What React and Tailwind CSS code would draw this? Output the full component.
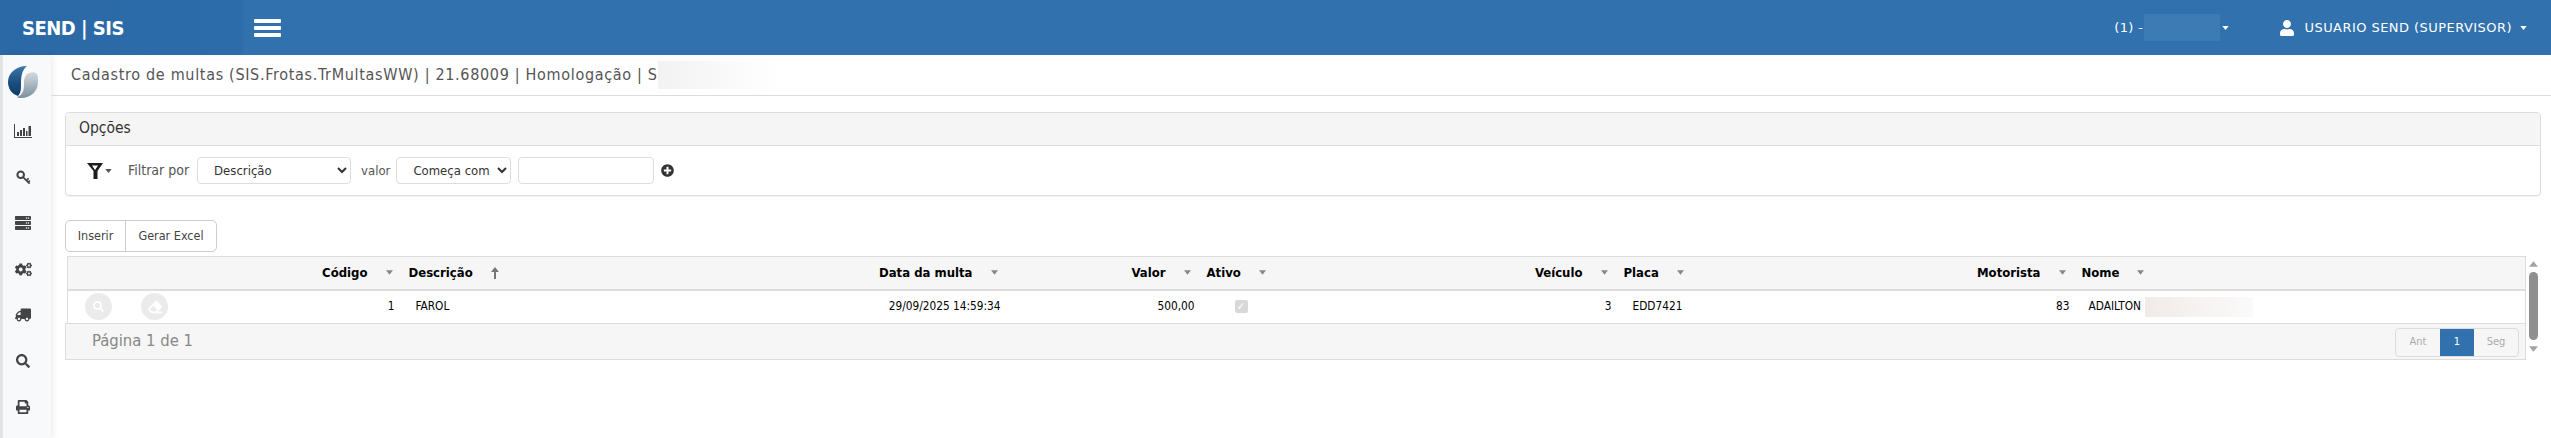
import { FaCogs, FaEraser, FaPlusCircle, FaPrint, FaSearch, FaServer, FaTruck, FaUser } from "react-icons/fa";

const font = { fontFamily: '"DejaVu Sans Condensed", "DejaVu Sans", sans-serif' };
const wideFont = { fontFamily: '"DejaVu Sans", sans-serif' };

function Caret({ className }) {
    return (
        <svg viewBox="0 0 8 5" className={className} fill="currentColor">
            <path d="M0 0h8L4 5z" />
        </svg>
    );
}

function ChartIcon() {
    return (
        <svg viewBox="0 0 18 14" className="w-[18px] h-[14px]" fill="#444">
            <path d="M0 0h1v13h17v1H0z" />
            <path d="M3 8h2v4H3zM6 6h2v6H6zM9 4h2v8H9zM12 7h1.500v5H12zM14.500 2H17v10h-2.500z" />
        </svg>
    );
}

function KeyIcon() {
    return (
        <svg viewBox="0 0 16 16" className="w-[15px] h-[15px]" fill="none" stroke="#444">
            <circle cx="5" cy="5" r="3.500" strokeWidth="2.200" />
            <path d="M7.500 7.500l7 7M11 11l2.500-2M13 13l1.800-1.600" strokeWidth="1.800" />
        </svg>
    );
}

function FunnelIcon() {
    return (
        <svg viewBox="0 0 16 16" className="w-[16px] h-[16px]" fill="#1c1c1c">
            <path d="M0 0h16l-5.500 8v8h-4V8zM5 2.500l3 4.500 3-4.500z" fillRule="evenodd" />
        </svg>
    );
}

function Logo() {
    return (
        <svg viewBox="0 0 30 32" className="w-[30px] h-[32px]">
            <defs>
                <linearGradient id="logoBlue" x1="0" y1="0" x2="0" y2="1">
                    <stop offset="0" stopColor="#3b78ab" />
                    <stop offset="0.55" stopColor="#1c4f7f" />
                    <stop offset="1" stopColor="#0d3a63" />
                </linearGradient>
                <linearGradient id="logoGray" x1="0" y1="0" x2="0" y2="1">
                    <stop offset="0" stopColor="#d4dade" />
                    <stop offset="1" stopColor="#7d8f9c" />
                </linearGradient>
            </defs>
            <path d="M19 0C8 0 0 7 0 16c0 7 4 12 10 14 3-3 3-7 3-12 0-8 1-14 6-18z" fill="url(#logoBlue)" />
            <path d="M29 8c1 2 1 5 1 8 0 9-7 16-17 16-2 0-3 0-4-1 6-2 7-7 7-13 0-5 1-10 5-11 3-1 6-1 8 1z" fill="url(#logoGray)" />
        </svg>
    );
}

function SortHead({ label, right, up, className }) {
    return (
        <th className={"font-bold text-[13px] text-black p-0 " + (className || "")}>
            <div className={"flex items-center " + (right ? "justify-end pr-[8px]" : "pl-[8px]")}>
                <span>{label}</span>
                {up ? (
                    <svg viewBox="0 0 8 12" className="w-[8px] h-[12px] ml-[18px] text-[#777]" fill="currentColor">
                        <path d="M4 0l4 5H5v7H3V5H0z" />
                    </svg>
                ) : (
                    <Caret className="w-[7px] h-[5px] ml-[18px] text-[#888]" />
                )}
            </div>
        </th>
    );
}

const sideIcons = [
    <ChartIcon key="chart" />,
    <KeyIcon key="key" />,
    <FaServer key="server" className="text-[#444] text-[16px]" />,
    <FaCogs key="cogs" className="text-[#444] text-[17px]" />,
    <FaTruck key="truck" className="text-[#444] text-[16px] -scale-x-100" />,
    <FaSearch key="search" className="text-[#444] text-[14px]" />,
    <FaPrint key="print" className="text-[#444] text-[14px]" />,
];

export default function App() {
    return (
        <div className="h-[438px] w-full flex flex-col bg-white overflow-hidden" style={font}>
            {/* Top bar */}
            <header className="h-[55px] flex items-center bg-[#3071ae] text-white shrink-0">
                <div className="w-[243px] h-full flex items-center pl-[22px] bg-gradient-to-r from-[#2a69a5] to-[#2d6cab]">
                    <span className="text-[20px] font-bold leading-none tracking-[-0.5px]">SEND | SIS</span>
                </div>
                <div className="ml-[11px] w-[27px] flex flex-col gap-[3px]">
                    <div className="h-[4px] rounded-[1px] bg-white" />
                    <div className="h-[4px] rounded-[1px] bg-white" />
                    <div className="h-[4px] rounded-[1px] bg-white" />
                </div>
                <div className="ml-auto flex items-center text-[13px] pr-[24px]" style={wideFont}>
                    <span className="tracking-[0.4px]">(1) -</span>
                    <div className="w-[76px] h-[27px] ml-[1px] bg-[#3d7bb4]" />
                    <Caret className="w-[7px] h-[4px] ml-[2px]" />
                    <FaUser className="ml-[50px] text-[16px]" />
                    <span className="ml-[9px] tracking-[0.45px]">USUARIO SEND (SUPERVISOR)</span>
                    <Caret className="w-[7px] h-[4px] ml-[8px]" />
                </div>
            </header>

            <div className="flex flex-1 min-h-0">
                {/* Side menu */}
                <aside className="w-[51px] border-l-[3px] border-[#e4e4e4] bg-[#f8f9fb] shadow-[2px_0_6px_rgba(0,0,0,0.08)] flex flex-col items-center shrink-0">
                    <div className="mt-[11px] mr-[8px] h-[32px]">
                        <Logo />
                    </div>
                    <div className="mt-[23px] mr-[8px] flex flex-col items-center">
                        {sideIcons.map((icon) => (
                            <div key={icon.key} className="h-[46px] flex items-center justify-center first:h-[20px] first:mb-[13px]">
                                {icon}
                            </div>
                        ))}
                    </div>
                </aside>

                <main className="flex-1 min-w-0">
                    <div className="h-[41px] border-b border-[#dcdcdc] pl-[20px] flex items-center text-[16px] tracking-[0.68px] text-[#555]">
                        <span>Cadastro de multas (SIS.Frotas.TrMultasWW) | 21.68009 | Homologação | S</span>
                        <div className="w-[120px] h-[28px] bg-gradient-to-r from-[#f2f2f2] to-white" />
                    </div>

                    <div className="pl-[14px] pr-[10px]">
                        {/* Options panel */}
                        <section className="mt-[16px] h-[84px] border border-[#ddd] rounded-[4px] shadow-[0_1px_1px_rgba(0,0,0,0.05)]">
                            <div className="h-[33px] bg-[#f5f5f5] border-b border-[#ddd] rounded-t-[4px] pl-[13px] flex items-center text-[15.500px] text-[#333]">
                                Opções
                            </div>
                            <div className="h-[49px] flex items-center pl-[21px] text-[14px] text-[#555]">
                                <FunnelIcon />
                                <Caret className="w-[7px] h-[4px] ml-[2px] text-[#555]" />
                                <span className="ml-[16px]">Filtrar por</span>
                                <select defaultValue="Descrição" className="ml-[8px] w-[154px] h-[27px] border border-[#ddd] rounded-[4px] bg-white pl-[12px] pr-[2px] text-[13px] text-[#333]">
                                    <option>Descrição</option>
                                </select>
                                <span className="ml-[10px] text-[13px]">valor</span>
                                <select defaultValue="Começa com" className="ml-[6px] w-[115px] h-[27px] border border-[#ddd] rounded-[4px] bg-white pl-[12px] pr-[2px] text-[13px] text-[#333]">
                                    <option>Começa com</option>
                                </select>
                                <input className="ml-[7px] w-[136px] h-[27px] border border-[#ddd] rounded-[4px] bg-white" />
                                <FaPlusCircle className="ml-[7px] text-[13px] text-[#333]" />
                            </div>
                        </section>

                        {/* Actions */}
                        <div className="mt-[24px] h-[32px] w-[152px] flex border border-[#ccc] rounded-[5px] text-[12.500px] text-[#444]">
                            <button className="w-[60px] border-r border-[#ccc]">Inserir</button>
                            <button className="flex-1">Gerar Excel</button>
                        </div>

                        {/* Grid + scrollbar */}
                        <div className="mt-[4px] flex">
                            <div className="w-[2461px]">
                                <table className="ml-[2px] w-[2459px] table-fixed border-collapse border-l border-t border-r border-[#ddd]">
                                    <colgroup>
                                        <col className="w-[333px]" />
                                        <col className="w-[461px]" />
                                        <col className="w-[144px]" />
                                        <col className="w-[193px]" />
                                        <col className="w-[253px]" />
                                        <col className="w-[164px]" />
                                        <col className="w-[286px]" />
                                        <col className="w-[172px]" />
                                        <col />
                                    </colgroup>
                                    <thead>
                                        <tr className="h-[33px] bg-[#f6f6f6] border-b-2 border-[#ddd]">
                                            <SortHead label="Código" right />
                                            <SortHead label="Descrição" up />
                                            <SortHead label="Data da multa" right />
                                            <SortHead label="Valor" right />
                                            <SortHead label="Ativo" />
                                            <SortHead label="Veículo" right />
                                            <SortHead label="Placa" />
                                            <SortHead label="Motorista" right />
                                            <SortHead label="Nome" />
                                        </tr>
                                    </thead>
                                    <tbody>
                                        <tr className="h-[33px] text-[11.750px] text-black">
                                            <td className="p-0">
                                                <div className="flex items-center">
                                                    <span className="ml-[17px] mr-[29px] w-[27px] h-[27px] rounded-full bg-[#ebebeb] flex items-center justify-center text-white text-[11px]">
                                                        <FaSearch />
                                                    </span>
                                                    <span className="w-[27px] h-[27px] rounded-full bg-[#ebebeb] flex items-center justify-center text-white text-[14px]">
                                                        <FaEraser />
                                                    </span>
                                                    <span className="ml-auto pr-[6px]">1</span>
                                                </div>
                                            </td>
                                            <td className="p-0 pl-[15px]">FAROL</td>
                                            <td className="p-0 text-right pr-[5px]">29/09/2025 14:59:34</td>
                                            <td className="p-0 text-right pr-[4px]">500,00</td>
                                            <td className="p-0 pl-[36px]">
                                                <span className="w-[13px] h-[13px] rounded-[2px] bg-[#d8d8d8] text-white flex items-center justify-center text-[11px] leading-none">✓</span>
                                            </td>
                                            <td className="p-0 text-right pr-[4px]">3</td>
                                            <td className="p-0 pl-[17px]">EDD7421</td>
                                            <td className="p-0 text-right pr-[4px]">83</td>
                                            <td className="p-0 pl-[15px]">
                                                <div className="flex items-center">
                                                    <span>ADAILTON</span>
                                                    <div className="ml-[4px] w-[108px] h-[20px] bg-gradient-to-r from-[#f1ebe8] to-[#fbfafa]" />
                                                </div>
                                            </td>
                                        </tr>
                                    </tbody>
                                </table>
                                <div className="h-[37px] bg-[#f6f6f6] border border-[#ddd] flex items-center pl-[26px] pr-[6px]">
                                    <span className="text-[16.500px] text-[#888]">Página 1 de 1</span>
                                    <div className="ml-auto mt-[3px] h-[29px] w-[124px] flex border border-[#ddd] rounded-[4px] text-[11px] text-[#aaa]">
                                        <span className="w-[44px] flex items-center justify-center">Ant</span>
                                        <span className="w-[34px] flex items-center justify-center bg-[#3071ae] text-white">1</span>
                                        <span className="flex-1 flex items-center justify-center">Seg</span>
                                    </div>
                                </div>
                            </div>
                            <div className="w-[16px] flex flex-col items-center pt-[5px] ml-[-1px]">
                                <Caret className="w-[9px] h-[6px] rotate-180 text-[#a3a3a3]" />
                                <div className="mt-[5px] w-[9px] h-[68px] rounded-full bg-[#8f8f8f]" />
                                <Caret className="mt-[6px] w-[9px] h-[6px] text-[#a3a3a3]" />
                            </div>
                        </div>
                    </div>
                </main>
            </div>
        </div>
    );
}
